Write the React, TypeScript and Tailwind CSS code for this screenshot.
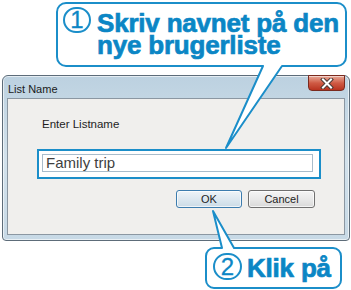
import React from "react";

const BLUE = "#1b8ec9";

function CloseButton() {
  return (
    <div className="w-[37px] h-[16px] -mt-[1px] rounded-b-[4px] border border-[#7a2a1e] bg-gradient-to-b from-[#e6a898] via-[#cf5a44] to-[#b8321f] flex items-center justify-center shadow-[inset_0_1px_0_rgba(255,255,255,0.5)]">
      <svg width="14" height="11" viewBox="0 0 14 11">
        <path d="M3 1.5 L11 9.5 M11 1.5 L3 9.5" stroke="#4a3a36" strokeWidth="4" strokeLinecap="square" />
        <path d="M3 1.5 L11 9.5 M11 1.5 L3 9.5" stroke="#ffffff" strokeWidth="2" strokeLinecap="square" />
      </svg>
    </div>
  );
}

export default function App() {
  return (
    <div className="relative w-[351px] h-[290px] bg-white overflow-hidden font-['Liberation_Sans',Arial,sans-serif]">
      <div className="pt-[75px] pl-[2px]">
        <div className="w-[348px] h-[166px] rounded-t-[6px] rounded-b-[4px] border border-[#5d6c79] bg-gradient-to-b from-[#bcd1e0] via-[#d3e2ec] to-[#c7d9e6] flex flex-col px-[4px] pb-[5px] shadow-[inset_0_0_0_1px_rgba(255,255,255,0.6)]">
          <div className="h-[22px] flex items-start justify-between">
            <span className="text-[11px] leading-none text-[#1a1a1a] pl-[1px] pt-[8px]">List Name</span>
            <CloseButton />
          </div>
          <div className="flex-1 border border-[#8b97a2] bg-[#f0efed] flex flex-col pt-[19px]">
            <div className="pl-[34px] text-[11.5px] leading-[13px] text-[#1e1e1e]">Enter Listname</div>
            <div className="ml-[29px] mt-[18px] w-[284px] h-[30px] border-2 border-[#1b8ec9] bg-white pl-[3px] pr-[6px] pt-[3px] pb-[5px]">
              <div className="h-full border border-[#a9bccb] bg-white flex items-center pl-[3px] text-[15px] text-[#3f3f3f]">
                Family trip
              </div>
            </div>
            <div className="mt-[11px] flex justify-end pr-[29px] gap-[6px]">
              <div className="w-[66px] h-[18px] rounded-[3px] border border-[#3c7cae] bg-gradient-to-b from-[#eef4f8] via-[#dde8f0] to-[#cbdbe6] flex items-center justify-center text-[11px] text-[#1e1e1e] shadow-[inset_0_0_0_1px_rgba(255,255,255,0.7)]">
                OK
              </div>
              <div className="w-[67px] h-[18px] rounded-[3px] border border-[#707070] bg-gradient-to-b from-[#f5f5f5] via-[#e9e9e9] to-[#d9d9d9] flex items-center justify-center text-[11px] text-[#1e1e1e] shadow-[inset_0_0_0_1px_rgba(255,255,255,0.7)]">
                Cancel
              </div>
            </div>
          </div>
        </div>
      </div>

      <svg className="absolute left-0 top-0 pointer-events-none" width="351" height="290" viewBox="0 0 351 290">
        <path
          d="M66 3 H337 A9 9 0 0 1 346 12 V57 A9 9 0 0 1 337 66 H282 L226 148 L263 66 H66 A9 9 0 0 1 57 57 V12 A9 9 0 0 1 66 3 Z"
          fill="#ffffff"
          stroke={BLUE}
          strokeWidth="2"
          strokeLinejoin="round"
        />
        <path
          d="M214 248 H222 L213 211 L234 248 H333 A8 8 0 0 1 341 256 V280 A8 8 0 0 1 333 288 H214 A8 8 0 0 1 206 280 V256 A8 8 0 0 1 214 248 Z"
          fill="#ffffff"
          stroke={BLUE}
          strokeWidth="2"
          strokeLinejoin="round"
        />
      </svg>

      <div className="absolute left-[63px] top-[7px] w-[28px] h-[26px] rounded-full border-2 border-[#1b8ec9] flex items-center justify-center text-[24px] leading-none text-[#0b86c5] [-webkit-text-stroke:0.3px_#0b86c5]">
        1
      </div>
      <div className="absolute left-[97px] top-[12px] text-[26px] leading-[22px] font-bold text-[#0b86c5] whitespace-nowrap tracking-[-0.2px] [-webkit-text-stroke:0.7px_#0b86c5]">
        <div>Skriv navnet på den</div>
        <div>nye brugerliste</div>
      </div>

      <div className="absolute left-[213px] top-[253px] w-[29px] h-[27px] rounded-full border-2 border-[#1b8ec9] flex items-center justify-center text-[24px] leading-none text-[#0b86c5] [-webkit-text-stroke:0.3px_#0b86c5]">
        2
      </div>
      <div className="absolute left-[247px] top-[257px] text-[26px] leading-[22px] font-bold text-[#0b86c5] whitespace-nowrap tracking-[-0.2px] [-webkit-text-stroke:0.7px_#0b86c5]">
        Klik på
      </div>
    </div>
  );
}
